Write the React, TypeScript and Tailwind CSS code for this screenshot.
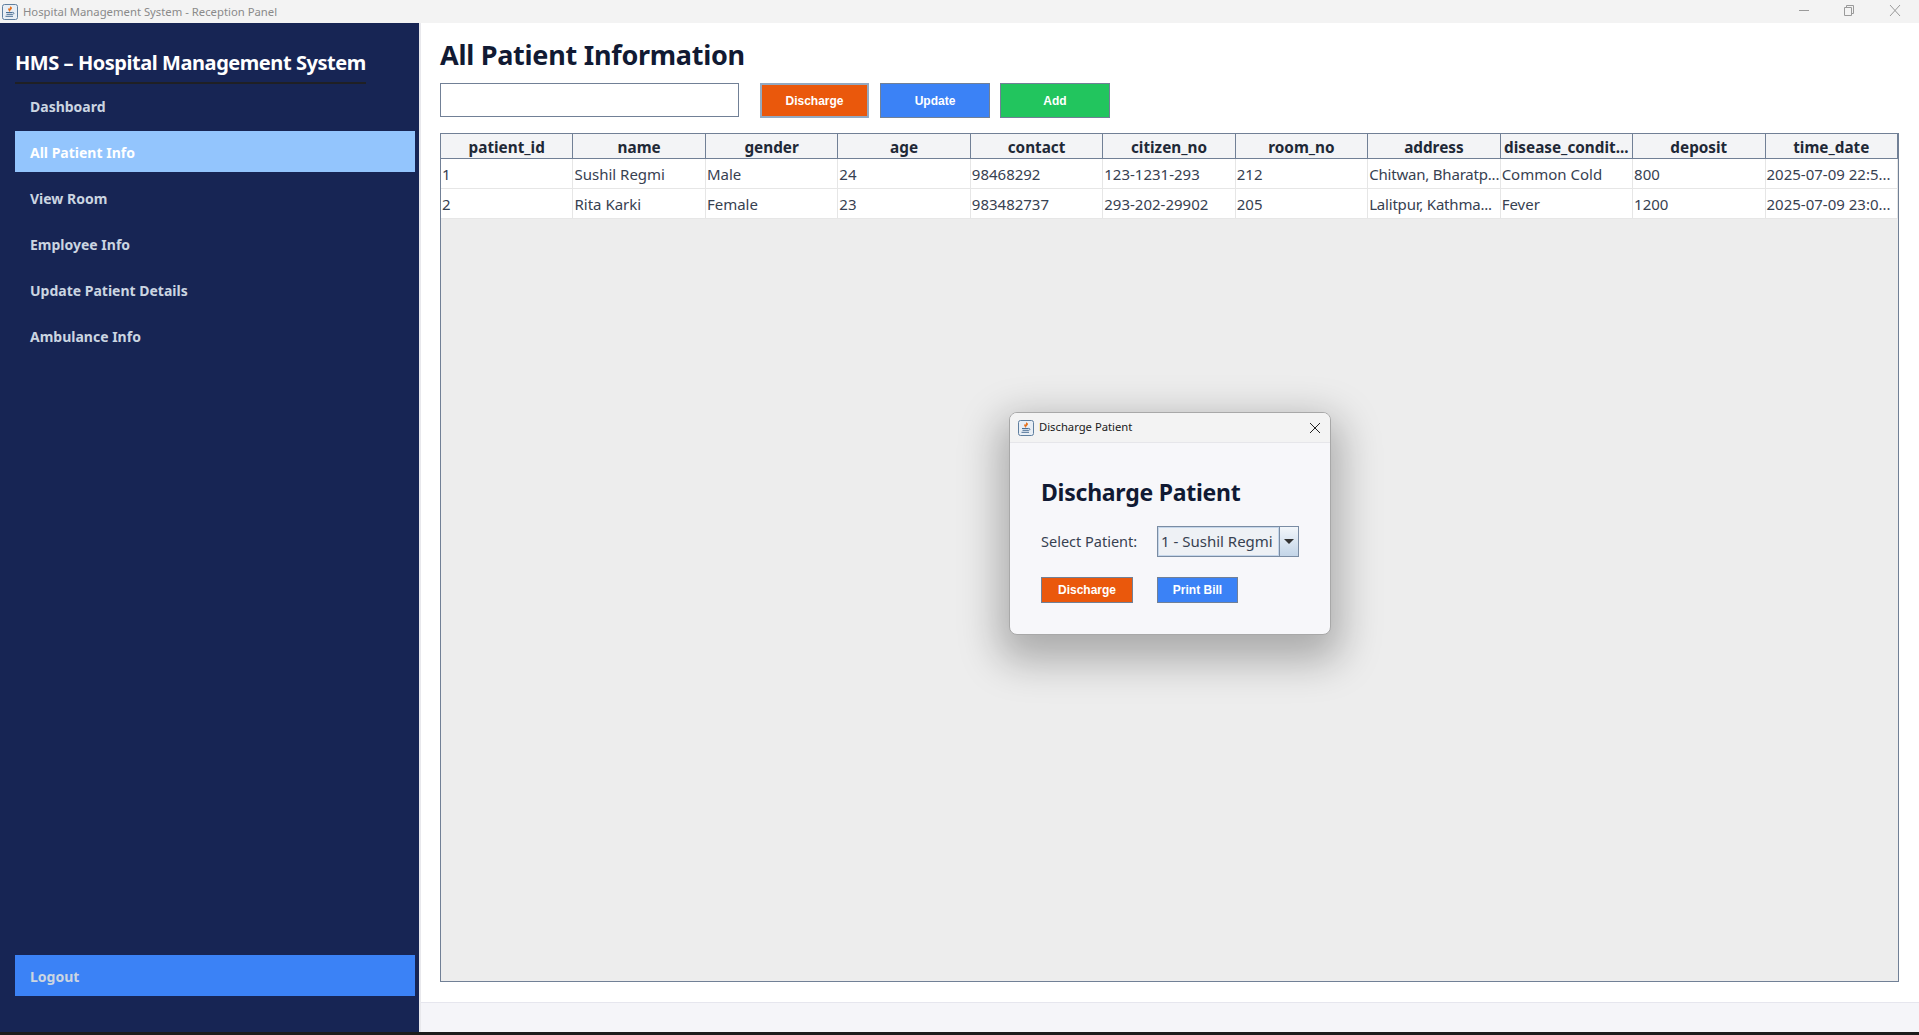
const NAV_ITEMS = ["Dashboard", "All Patient Info", "View Room", "Employee Info", "Update Patient Details", "Ambulance Info"];

const COLUMNS = ["patient_id", "name", "gender", "age", "contact", "citizen_no", "room_no", "address", "disease_condit...", "deposit", "time_date"];

const ROWS = [
  ["1", "Sushil Regmi", "Male", "24", "98468292", "123-1231-293", "212", "Chitwan, Bharatp...", "Common Cold", "800", "2025-07-09 22:5..."],
  ["2", "Rita Karki", "Female", "23", "983482737", "293-202-29902", "205", "Lalitpur, Kathma...", "Fever", "1200", "2025-07-09 23:0..."],
];

function JavaIcon() {
  return (
    <svg width="16" height="16" viewBox="0 0 16 16" className="shrink-0">
      <rect x="0.5" y="0.5" width="15" height="15" rx="2" fill="#e8eef5" stroke="#5f7f9f" />
      <path d="M8.5 2.5c1 1.5-1.5 2.2-.8 4 .3-1.2 2.2-1.6 1.8-3.2M6.8 4.5c-.5 1 .4 1.5.2 2.2" fill="none" stroke="#e8701a" strokeWidth="1.1" />
      <path d="M4 8.5h6.5M4.5 10.3h5.5M3.5 12.3h7.5" fill="none" stroke="#4a6f94" strokeWidth="1" />
      <path d="M10.5 8.3c2 0 2 2-.6 2.2" fill="none" stroke="#4a6f94" strokeWidth="0.9" />
    </svg>
  );
}

function DischargeDialog() {
  return (
    <div className="absolute left-[1009px] top-[412px] w-[322px] h-[223px] rounded-lg overflow-hidden bg-[#f7f7fa] border border-[#a8a8a8] shadow-[0_16px_40px_10px_rgba(0,0,0,0.28)]">
      <div className="flex h-[30px] items-center gap-[5px] border-b border-[#e6e6ea] bg-[#f3f3f3] pl-2 pr-[9px]">
        <JavaIcon />
        <span className="flex-1 text-[11.25px] text-[#1a1a1a] font-['Noto_Sans',sans-serif]">Discharge Patient</span>
        <svg width="12" height="12" viewBox="0 0 12 12" className="shrink-0">
          <path d="M1 1l10 10M11 1L1 11" stroke="#222222" strokeWidth="1" fill="none" />
        </svg>
      </div>
      <div className="pl-[31px] pt-[31px] font-['Noto_Sans',sans-serif]">
        <h2 className="text-[23px] leading-[36px] font-bold tracking-[-0.25px] text-[#111a33]">Discharge Patient</h2>
        <div className="mt-[16px] flex items-center">
          <span className="w-[116px] text-[14.5px] text-[#374151]">Select Patient:</span>
          <div className="flex h-[31px] w-[142px] border border-[#7a8ca3] bg-[#eef1f5]">
            <span className="flex-1 border border-[#c5d6ea] pl-[2px] text-[15px] leading-[27px] text-[#374151] whitespace-nowrap overflow-hidden">1 - Sushil Regmi</span>
            <span className="flex w-[19px] items-center justify-center border-l border-[#7a8ca3] bg-gradient-to-b from-[#f2f6fa] to-[#c3d5e8]">
              <span className="h-0 w-0 border-x-[5px] border-t-[5px] border-x-transparent border-t-[#333333]" />
            </span>
          </div>
        </div>
        <div className="mt-[20px] flex font-['Liberation_Sans',sans-serif] text-[12px] font-bold text-white">
          <button className="h-[26px] w-[92px] border border-[#718096] bg-[#ea580c]">Discharge</button>
          <button className="ml-[24px] h-[26px] w-[81px] border border-[#718096] bg-[#3b82f6]">Print Bill</button>
        </div>
      </div>
    </div>
  );
}

export default function App() {
  return (
    <div className="relative flex h-[1035px] w-[1919px] flex-col overflow-hidden bg-white font-['Noto_Sans',sans-serif]">
      <div className="flex h-[23px] shrink-0 items-center bg-[#f3f3f3] pl-[2px]">
        <JavaIcon />
        <span className="ml-[5px] flex-1 pt-[1px] text-[11.3px] text-[#8a8a8a]">Hospital Management System - Reception Panel</span>
        <svg width="120" height="23" viewBox="0 0 120 23" className="shrink-0">
          <path d="M0 10.5h10" stroke="#9a9a9a" fill="none" />
          <path d="M45.5 7.5h7v8h-7zM47.5 7.5v-2h7v8h-2" stroke="#9a9a9a" fill="none" />
          <path d="M91 5l10 11M101 5L91 16" stroke="#9a9a9a" fill="none" />
        </svg>
      </div>

      <div className="flex min-h-0 flex-1">
        <aside className="flex w-[419px] shrink-0 flex-col bg-[#172554] pl-[15px] pr-[4px] pb-[36px]">
          <div className="pt-[24px]">
            <div className="w-[351px] border-b-2 border-[#1f2024] pb-[3px] text-[20px] leading-[32px] font-bold tracking-[-0.45px] text-white whitespace-nowrap">HMS – Hospital Management System</div>
          </div>
          <nav className="mt-[1px] flex flex-col gap-[5px]">
            {NAV_ITEMS.map((item) => (
              <div
                key={item}
                className={`flex h-[41px] items-center pl-[15px] pt-[1px] text-[14px] font-bold ${item === "All Patient Info" ? "bg-[#93c5fd] text-white" : "text-[#cbd5e1]"}`}
              >
                {item}
              </div>
            ))}
          </nav>
          <div className="mt-auto flex h-[41px] items-center bg-[#3b82f6] pl-[15px] pt-[1px] text-[14px] font-bold text-[#cbd5e1]">Logout</div>
        </aside>

        <main className="flex min-w-0 flex-1 flex-col border-l-2 border-[#e8e8ec]">
          <div className="flex min-h-0 flex-1 flex-col pl-[19px] pr-[20px] pb-[20px]">
            <h1 className="pt-[11px] text-[27px] leading-[42px] font-bold tracking-[-0.27px] text-[#111a33]">All Patient Information</h1>
            <div className="mt-[7px] flex items-start">
              <input className="h-[34px] w-[299px] border border-[#718096] bg-white" />
              <button className="ml-[21px] h-[35px] w-[109px] border-2 border-[#93a9c2] bg-[#ea580c] text-[12px] font-bold text-white font-['Liberation_Sans',sans-serif]">Discharge</button>
              <button className="ml-[11px] h-[35px] w-[110px] border border-[#718096] bg-[#3b82f6] text-[12px] font-bold text-white font-['Liberation_Sans',sans-serif]">Update</button>
              <button className="ml-[10px] h-[35px] w-[110px] border border-[#718096] bg-[#22c55e] text-[12px] font-bold text-white font-['Liberation_Sans',sans-serif]">Add</button>
            </div>
            <div className="mt-[15px] flex-1 border border-[#718096] bg-[#ededed]">
              <div className="grid h-[25px] grid-cols-11 border-b border-[#718096] bg-[#f3f4f6]">
                {COLUMNS.map((col) => (
                  <div key={col} className="border-r border-[#718096] pt-[3px] text-center text-[15.3px] leading-[21px] font-bold text-[#1f2937] whitespace-nowrap overflow-hidden">{col}</div>
                ))}
              </div>
              {ROWS.map((row) => (
                <div key={row[0]} className="grid h-[30px] grid-cols-11 border-b border-[#e6e6e6] bg-white">
                  {row.map((cell, i) => (
                    <div key={i} className={`border-r border-[#e6e6e6] pl-[1px] pt-[1px] text-[15px] leading-[28px] text-[#374151] whitespace-nowrap overflow-hidden ${i === 7 ? "tracking-[-0.2px]" : ""}`}>{cell}</div>
                  ))}
                </div>
              ))}
            </div>
          </div>
          <div className="h-[30px] shrink-0 border-t border-[#e6e6ee] bg-[#f5f5f9]" />
        </main>
      </div>
      <div className="h-[3px] shrink-0 bg-[#1c1c1c]" />
      <DischargeDialog />
    </div>
  );
}
